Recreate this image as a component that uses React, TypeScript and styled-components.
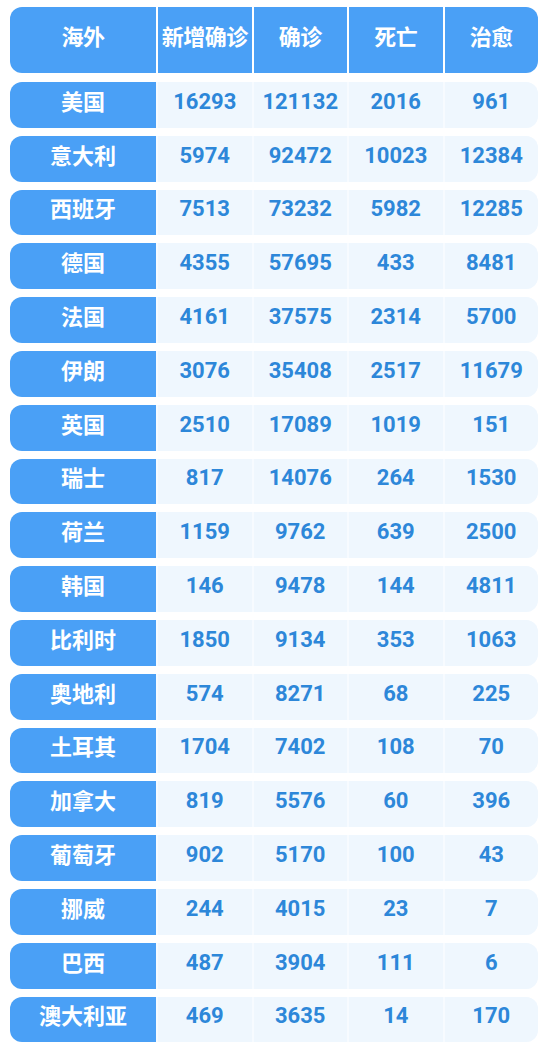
import React from "react";
import styled, { createGlobalStyle } from "styled-components";

const Global = createGlobalStyle`
  html, body { margin: 0; padding: 0; background: #ffffff; }
  body { font-family: Roboto, "Noto Sans CJK SC", sans-serif; }
`;

const Page = styled.div`
  width: 550px;
  padding: 7px 12px 0 10px;
  box-sizing: border-box;
  display: flex;
  flex-direction: column;
  gap: 8px;
`;

const Header = styled.div`
  display: grid;
  grid-template-columns: 146px repeat(4, 1fr);
  column-gap: 2px;
  height: 66px;
  margin-bottom: 1px;
`;

const HeadCell = styled.div<{ $pos?: "first" | "last" }>`
  background: #4aa0f6;
  color: #ffffff;
  font-family: "Noto Sans CJK SC", sans-serif;
  font-weight: 700;
  font-size: 22px;
  line-height: 1;
  padding-bottom: 10px;
  box-sizing: border-box;
  display: flex;
  align-items: center;
  justify-content: center;
  white-space: nowrap;
  letter-spacing: -0.5px;
  border-radius: ${(p) =>
    p.$pos === "first" ? "12px 0 0 12px" : p.$pos === "last" ? "0 12px 12px 0" : "0"};
`;

const Row = styled.div`
  display: grid;
  grid-template-columns: 146px repeat(4, 1fr);
  column-gap: 2px;
  height: 45.8px;
  background: #f7fbff;
  border-radius: 12px;
`;

const NameCell = styled.div`
  background: #4aa0f6;
  color: #ffffff;
  font-family: "Noto Sans CJK SC", sans-serif;
  font-weight: 700;
  font-size: 22px;
  line-height: 1;
  padding-bottom: 10px;
  box-sizing: border-box;
  display: flex;
  align-items: center;
  justify-content: center;
  border-radius: 12px 0 0 12px;
`;

const NumCell = styled.div<{ $last?: boolean }>`
  background: #eff7fe;
  color: #2d87d9;
  font-family: Roboto, sans-serif;
  font-weight: 700;
  font-size: 22px;
  line-height: 1;
  padding-bottom: 6px;
  box-sizing: border-box;
  display: flex;
  align-items: center;
  justify-content: center;
  border-radius: ${(p) => (p.$last ? "0 12px 12px 0" : "0")};
`;

const headers = ["海外", "新增确诊", "确诊", "死亡", "治愈"];

const data: [string, number, number, number, number][] = [
  ["美国", 16293, 121132, 2016, 961],
  ["意大利", 5974, 92472, 10023, 12384],
  ["西班牙", 7513, 73232, 5982, 12285],
  ["德国", 4355, 57695, 433, 8481],
  ["法国", 4161, 37575, 2314, 5700],
  ["伊朗", 3076, 35408, 2517, 11679],
  ["英国", 2510, 17089, 1019, 151],
  ["瑞士", 817, 14076, 264, 1530],
  ["荷兰", 1159, 9762, 639, 2500],
  ["韩国", 146, 9478, 144, 4811],
  ["比利时", 1850, 9134, 353, 1063],
  ["奥地利", 574, 8271, 68, 225],
  ["土耳其", 1704, 7402, 108, 70],
  ["加拿大", 819, 5576, 60, 396],
  ["葡萄牙", 902, 5170, 100, 43],
  ["挪威", 244, 4015, 23, 7],
  ["巴西", 487, 3904, 111, 6],
  ["澳大利亚", 469, 3635, 14, 170],
];

export default function App() {
  return (
    <>
      <Global />
      <Page>
        <Header>
          {headers.map((h, i) => (
            <HeadCell key={h} $pos={i === 0 ? "first" : i === headers.length - 1 ? "last" : undefined}>
              {h}
            </HeadCell>
          ))}
        </Header>
        {data.map(([name, ...nums]) => (
          <Row key={name}>
            <NameCell>{name}</NameCell>
            {nums.map((n, i) => (
              <NumCell key={i} $last={i === nums.length - 1}>
                {n}
              </NumCell>
            ))}
          </Row>
        ))}
      </Page>
    </>
  );
}
